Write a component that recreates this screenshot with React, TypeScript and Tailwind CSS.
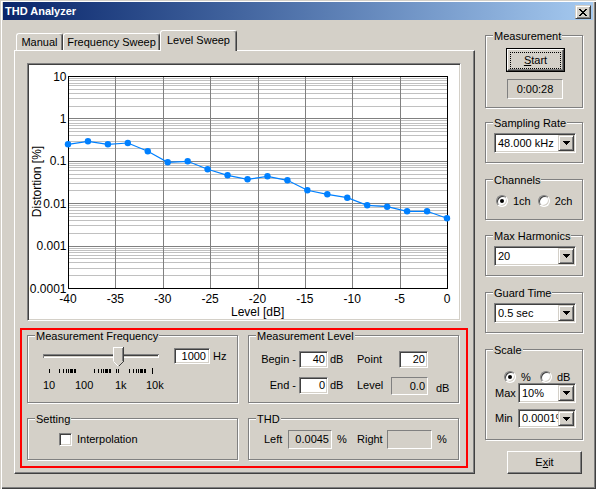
import React from 'react';

// classic 3D edges
const sunken2 =
  'border border-t-[#808080] border-l-[#808080] border-r-white border-b-white shadow-[inset_1px_1px_0_#404040,inset_-1px_-1px_0_#d4d0c8]';
const sunken1 = 'border border-t-[#808080] border-l-[#808080] border-r-white border-b-white';
const raised =
  'border border-t-[#d4d0c8] border-l-[#d4d0c8] border-r-[#404040] border-b-[#404040] shadow-[inset_1px_1px_0_#ffffff,inset_-1px_-1px_0_#808080]';
const pushButton =
  'border border-t-white border-l-white border-r-[#404040] border-b-[#404040] shadow-[inset_-1px_-1px_0_#808080]';

const POINTS = [
  144.3, 141.3, 144.3, 143, 151.3, 162.3, 161.3, 169.3, 175.3, 179.3, 176.3, 180.3, 190.3, 194.3, 197.7,
  205.3, 206.7, 211.3, 211.3, 218.3,
];

function GroupBox({
  title,
  className = '',
  children,
}: {
  title: string;
  className?: string;
  children?: React.ReactNode;
}) {
  return (
    <div className={`relative shrink-0 border border-[#808080] shadow-[1px_1px_0_#ffffff,inset_1px_1px_0_#ffffff] ${className}`}>
      <span className="absolute left-[7px] -top-[6px] px-[1px] bg-[#d4d0c8] leading-[13px] whitespace-nowrap">
        {title}
      </span>
      {children}
    </div>
  );
}

function DropButton() {
  return (
    <div className={`w-[16px] h-full shrink-0 flex items-center justify-center bg-[#d4d0c8] ${raised}`}>
      <svg width={7} height={4} viewBox="0 0 7 4" shapeRendering="crispEdges">
        <path d="M0 0h7v1h-1v1h-1v1h-1v1h-1v-1h-1v-1h-1v-1h-1z" fill="#000" />
      </svg>
    </div>
  );
}

function Combo({ value, className = '' }: { value: string; className?: string }) {
  return (
    <div className={`flex p-[1px] bg-white shrink-0 ${sunken2} ${className}`}>
      <span className="flex-1 overflow-hidden whitespace-nowrap pl-[2px] flex items-center">{value}</span>
      <DropButton />
    </div>
  );
}

function Edit({ value, className = '' }: { value: string; className?: string }) {
  return (
    <div className={`flex items-center justify-end bg-white shrink-0 ${sunken2} ${className}`}>{value}</div>
  );
}

function Static({ value, className = '' }: { value: string; className?: string }) {
  return (
    <div className={`flex items-center justify-end pr-[2px] bg-[#d4d0c8] shrink-0 ${sunken1} ${className}`}>
      {value}
    </div>
  );
}

function Radio({ checked = false }: { checked?: boolean }) {
  return (
    <span
      className={`w-[12px] h-[12px] shrink-0 rounded-full bg-white flex items-center justify-center border border-t-[#808080] border-l-[#808080] border-r-white border-b-white shadow-[inset_1px_1px_0_#404040,inset_-1px_-1px_0_#d4d0c8]`}
    >
      {checked && <span className="w-[4px] h-[4px] rounded-full bg-black" />}
    </span>
  );
}

function Checkbox() {
  return <span className={`w-[13px] h-[13px] shrink-0 bg-white ${sunken2}`} />;
}

function Tab({ label, className = '' }: { label: string; className?: string }) {
  return (
    <div
      className={`h-[17px] flex items-center justify-center rounded-t-[3px] border-t border-l border-r border-t-white border-l-white border-r-[#404040] shadow-[inset_-1px_0_0_#808080] whitespace-nowrap ${className}`}
    >
      {label}
    </div>
  );
}

function Chart() {
  const X0 = 68;
  const X1 = 447;
  const Y0 = 76;
  const Y1 = 288;
  const dec = (Y1 - Y0) / 5;
  const yOf = (v: number) => Y0 + (1 - Math.log10(v)) * dec;

  const minor: number[] = [];
  for (let e = -4; e <= 0; e++) {
    for (let k = 2; k <= 9; k++) minor.push(Math.round(yOf(k * 10 ** e)) + 0.5);
  }
  const major = [1, 0.1, 0.01, 0.001].map((v) => Math.round(yOf(v)) + 0.5);
  const vert = [1, 2, 3, 4, 5, 6, 7].map((i) => Math.round(X0 + (i * (X1 - X0)) / 8) + 0.5);
  const yLabels = ['10', '1', '0.1', '0.01', '0.001', '0.0001'];
  const xLabels = ['-40', '-35', '-30', '-25', '-20', '-15', '-10', '-5', '0'];
  const pts = POINTS.map((y, i) => [X0 + (i * (X1 - X0)) / 19, y]);
  const font = 'Liberation Sans, Arial, sans-serif';

  return (
    <svg width={430} height={254} viewBox="29 65 430 254" className="block">
      <g shapeRendering="crispEdges">
        {minor.map((y) => (
          <line key={`m${y}`} x1={X0} x2={X1} y1={y} y2={y} stroke="#c0c0c0" />
        ))}
        {major.map((y) => (
          <line key={`M${y}`} x1={X0} x2={X1} y1={y} y2={y} stroke="#808080" />
        ))}
        {vert.map((x) => (
          <line key={`v${x}`} x1={x} x2={x} y1={Y0} y2={Y1} stroke="#808080" />
        ))}
        <rect x={X0 + 0.5} y={Y0 + 0.5} width={X1 - X0} height={Y1 - Y0} fill="none" stroke="#000" />
      </g>
      <polyline points={pts.map((p) => p.join(',')).join(' ')} fill="none" stroke="#0080ff" strokeWidth={1.2} />
      {pts.map(([x, y], i) => (
        <circle key={i} cx={x} cy={y} r={3.2} fill="#0080ff" />
      ))}
      <g fontFamily={font} fontSize={12} fill="#000">
        {yLabels.map((t, i) => (
          <text key={t} x={66.5} y={Y0 + i * dec + 0.5} textAnchor="end" dominantBaseline="central">
            {t}
          </text>
        ))}
        {xLabels.map((t, i) => (
          <text key={t} x={X0 + (i * (X1 - X0)) / 8} y={298.5} textAnchor="middle" dominantBaseline="central">
            {t}
          </text>
        ))}
        <text x={231} y={312} dominantBaseline="central">
          Level [dB]
        </text>
        <text transform="translate(37 181.5) rotate(-90)" textAnchor="middle" dominantBaseline="central">
          Distortion [%]
        </text>
      </g>
    </svg>
  );
}

function Slider() {
  const ticks: number[] = [49.3];
  [59.3, 94.3, 129.3].forEach((b) => {
    for (let k = 2; k <= 10; k++) ticks.push(b + 22.7 * Math.log10(k / 2));
  });
  ticks.push(116.5, 118.5);
  const font = 'Liberation Sans, Arial, sans-serif';

  return (
    <svg width={134} height={47} viewBox="36 345 134 47" className="block shrink-0">
      <g shapeRendering="crispEdges">
        <rect x={43} y={354} width={116} height={4} fill="#d4d0c8" />
        <line x1={43} y1={354.5} x2={159} y2={354.5} stroke="#808080" />
        <line x1={44} y1={355.5} x2={158} y2={355.5} stroke="#404040" />
        <line x1={43} y1={357.5} x2={159} y2={357.5} stroke="#ffffff" />
        <line x1={43.5} y1={354} x2={43.5} y2={358} stroke="#808080" />
        <line x1={158.5} y1={355} x2={158.5} y2={358} stroke="#ffffff" />
        {ticks.map((x, i) => (
          <line key={i} x1={Math.floor(x) + 0.5} x2={Math.floor(x) + 0.5} y1={369} y2={373} stroke="#000" />
        ))}
        <line x1={152.5} x2={152.5} y1={368} y2={374} stroke="#000" />
        <path d="M113 347H124V361L118.5 366.5L113 361Z" fill="#d4d0c8" />
        <polyline points="113.5,361 113.5,347.5 123,347.5" stroke="#ffffff" fill="none" />
        <polyline points="123.5,347 123.5,361.5" stroke="#404040" fill="none" />
        <polyline points="122.5,348 122.5,361" stroke="#808080" fill="none" />
      </g>
      <line x1={123.5} y1={361.5} x2={118.5} y2={366.5} stroke="#404040" />
      <line x1={113.5} y1={361.5} x2={118.5} y2={366.5} stroke="#ffffff" />
      <g fontFamily={font} fontSize={11} fill="#000" dominantBaseline="central">
        <text x={43} y={385}>10</text>
        <text x={75} y={385}>100</text>
        <text x={115} y={385}>1k</text>
        <text x={146} y={385}>10k</text>
      </g>
    </svg>
  );
}

function TitleBar() {
  return (
    <div className="h-[18px] flex justify-between bg-linear-to-r from-[#0a246a] to-[#a6caf0] pl-[2px] pr-[2px]">
      <span className="self-center text-white font-bold">THD Analyzer</span>
      <div className={`mt-[3px] w-[16px] h-[14px] bg-[#d4d0c8] flex items-center justify-center ${raised}`}>
        <svg width={8} height={7} viewBox="0 0 8 7" shapeRendering="crispEdges">
          <path
            d="M0 0h2v1h-2zM6 0h2v1h-2zM1 1h2v1h-2zM5 1h2v1h-2zM2 2h4v1h-4zM3 3h2v1h-2zM2 4h4v1h-4zM1 5h2v1h-2zM5 5h2v1h-2zM0 6h2v1h-2zM6 6h2v1h-2z"
            fill="#000"
          />
        </svg>
      </div>
    </div>
  );
}

function TabControl() {
  return (
    <div className="ml-[11px] w-[461px] shrink-0 flex flex-col">
      <div className="relative z-10 flex items-end h-[20px] pl-[2px]">
        <Tab label="Manual" className="w-[47px]" />
        <Tab label="Frequency Sweep" className="w-[97px]" />
        <div className="w-[77px] h-[21px] -mb-[1px] pb-[1px] flex items-center justify-center bg-[#d4d0c8] rounded-t-[3px] border-t border-l border-r border-t-white border-l-white border-r-[#404040] shadow-[inset_-1px_0_0_#808080] whitespace-nowrap">
          Level Sweep
        </div>
      </div>
      <div className="h-[424px] flex flex-col items-start border border-t-white border-l-white border-r-[#404040] border-b-[#404040] shadow-[inset_-1px_-1px_0_#808080]">
        <div className={`ml-[12px] mt-[12px] w-[434px] h-[258px] p-[1px] bg-white ${sunken2}`}>
          <Chart />
        </div>

        <div className="ml-[5px] mt-[7px] w-[448px] h-[140px] border-2 border-[#ff0000] pl-[5px] pt-[5px] flex flex-col">
          <div className="flex gap-[10px]">
            <GroupBox title="Measurement Frequency" className="w-[211px] h-[68px]">
              <div className="flex items-start pl-[8px] pt-[9px]">
                <Slider />
                <div className="flex items-center h-[16px] mt-[3px] ml-[4px]">
                  <Edit value="1000" className="w-[36px] h-[16px] pr-[3px]" />
                  <span className="ml-[3px]">Hz</span>
                </div>
              </div>
            </GroupBox>
            <GroupBox title="Measurement Level" className="w-[211px] h-[68px]">
              <div className="flex flex-col pt-[15px]">
                <div className="flex items-center h-[17px]">
                  <span className="w-[47px] text-right whitespace-nowrap">Begin -</span>
                  <Edit value="40" className="ml-[3px] w-[29px] h-[17px] pr-[2px]" />
                  <span className="ml-[2px] w-[27px]">dB</span>
                  <span className="w-[42px]">Point</span>
                  <Edit value="20" className="w-[29px] h-[17px] pr-[2px]" />
                </div>
                <div className="flex items-start h-[18px] mt-[9px]">
                  <span className="w-[47px] h-[17px] flex items-center justify-end whitespace-nowrap">End -</span>
                  <Edit value="0" className="ml-[3px] w-[29px] h-[17px] pr-[2px]" />
                  <span className="ml-[2px] w-[27px] h-[17px] flex items-center">dB</span>
                  <span className="w-[34px] h-[17px] flex items-center">Level</span>
                  <Static value="0.0" className="w-[37px] h-[18px]" />
                  <span className="ml-[8px] h-[18px] pt-[4px] flex items-center">dB</span>
                </div>
              </div>
            </GroupBox>
          </div>
          <div className="flex gap-[10px] mt-[15px]">
            <GroupBox title="Setting" className="w-[211px] h-[42px]">
              <div className="flex items-center pt-[14px] pl-[31px]">
                <Checkbox />
                <span className="ml-[5px]">Interpolation</span>
              </div>
            </GroupBox>
            <GroupBox title="THD" className="w-[211px] h-[42px]">
              <div className="flex items-center pt-[11px] pl-[15px]">
                <span className="w-[24px]">Left</span>
                <Static value="0.0045" className="w-[44px] h-[19px]" />
                <span className="ml-[5px] w-[20px]">%</span>
                <span className="w-[30px]">Right</span>
                <Static value="" className="w-[45px] h-[19px]" />
                <span className="ml-[5px]">%</span>
              </div>
            </GroupBox>
          </div>
        </div>
      </div>
    </div>
  );
}

function RightColumn() {
  return (
    <div className="ml-[10px] w-[99px] shrink-0 flex flex-col items-start">
      <GroupBox title="Measurement" className="mt-[5px] w-[98px] h-[73px] flex flex-col items-start">
        <div className="ml-[20px] mt-[12px] w-[59px] h-[24px] border border-black">
          <div className={`w-full h-full flex items-center justify-center ${pushButton}`}>
            <div className="w-[51px] h-[17px] flex items-center justify-center border border-dotted border-black">
              <span>
                <span className="underline underline-offset-[1px]">S</span>tart
              </span>
            </div>
          </div>
        </div>
        <div className={`ml-[21px] mt-[7px] w-[56px] h-[20px] flex items-center justify-center ${sunken1}`}>
          0:00:28
        </div>
      </GroupBox>

      <GroupBox title="Sampling Rate" className="mt-[14px] w-[98px] h-[41px]">
        <Combo value="48.000 kHz" className="ml-[8px] mt-[10px] w-[82px] h-[20px]" />
      </GroupBox>

      <GroupBox title="Channels" className="mt-[16px] w-[98px] h-[41px]">
        <div className="flex items-center ml-[10px] mt-[15px] h-[12px]">
          <Radio checked />
          <span className="ml-[5px]">1ch</span>
          <span className="ml-[7px]">
            <Radio />
          </span>
          <span className="ml-[5px]">2ch</span>
        </div>
      </GroupBox>

      <GroupBox title="Max Harmonics" className="mt-[15px] w-[98px] h-[41px]">
        <Combo value="20" className="ml-[8px] mt-[10px] w-[82px] h-[20px]" />
      </GroupBox>

      <GroupBox title="Guard Time" className="mt-[16px] w-[98px] h-[41px]">
        <Combo value="0.5 sec" className="ml-[8px] mt-[10px] w-[82px] h-[20px]" />
      </GroupBox>

      <GroupBox title="Scale" className="mt-[16px] w-[98px] h-[91px]">
        <div className="flex items-center ml-[18px] mt-[21px] h-[12px]">
          <Radio checked />
          <span className="ml-[5px] w-[19px]">%</span>
          <Radio />
          <span className="ml-[5px]">dB</span>
        </div>
        <div className="flex items-center ml-[9px]">
          <span className="w-[23px]">Max</span>
          <Combo value="10%" className="w-[58px] h-[20px]" />
        </div>
        <div className="flex items-center ml-[9px] mt-[6px]">
          <span className="w-[23px]">Min</span>
          <Combo value="0.0001%" className="w-[58px] h-[19px]" />
        </div>
      </GroupBox>

      <div className={`mt-[11px] ml-[22px] w-[75px] h-[23px] flex items-center justify-center ${pushButton}`}>
        <span>
          E<span className="underline underline-offset-[1px]">x</span>it
        </span>
      </div>
    </div>
  );
}

export default function App() {
  return (
    <div className="w-[596px] h-[489px] overflow-hidden bg-[#d4d0c8] px-[3px] pt-[2px] text-[11px] leading-[13px] text-black font-['Liberation_Sans',Arial,sans-serif] shadow-[inset_1px_1px_0_#d4d0c8,inset_2px_2px_0_#ffffff,inset_-1px_-1px_0_#404040,inset_-2px_-2px_0_#808080]">
      <TitleBar />
      <div className="flex pt-[10px]">
        <TabControl />
        <RightColumn />
      </div>
    </div>
  );
}
